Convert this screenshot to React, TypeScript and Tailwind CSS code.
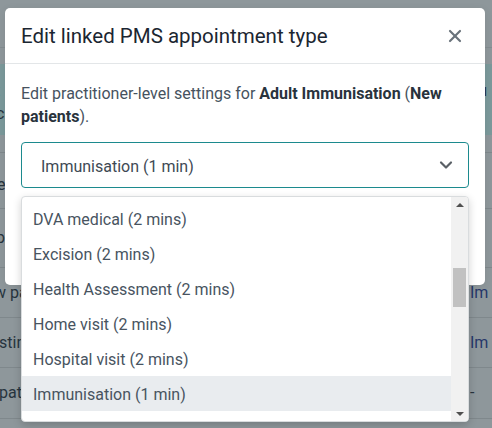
import React from "react";
import { ChevronDown, X } from "lucide-react";

const items = [
  "DVA medical (2 mins)",
  "Excision (2 mins)",
  "Health Assessment (2 mins)",
  "Home visit (2 mins)",
  "Hospital visit (2 mins)",
  "Immunisation (1 min)",
  "Insurance medical (2 mins)",
];

function BgRow({
  h,
  left,
  leftShift,
  right,
  rightBlue,
}: {
  h: string;
  left?: string;
  leftShift?: string;
  right?: string;
  rightBlue?: boolean;
}) {
  return (
    <div className={`${h} flex items-center justify-between border-b border-[#7f888c] overflow-hidden`}>
      <div className="w-[40px] overflow-hidden whitespace-nowrap text-[16px] text-[#27343e]">
        <span className={`inline-block ${leftShift ?? ""}`}>{left}</span>
      </div>
      <div
        className={`w-[22px] overflow-hidden whitespace-nowrap text-[16px] ${
          rightBlue ? "text-[#26386a]" : "text-[#27343e]"
        }`}
      >
        {right}
      </div>
    </div>
  );
}

export default function App() {
  return (
    <div className="relative w-[492px] h-[428px] overflow-hidden bg-[#8e979b] font-['Roboto','Inter',sans-serif]">
      {/* dimmed page behind */}
      <div className="flex flex-col">
        <div className="h-[48px] border-b border-[#838c90]" />
        <div className="h-[16px]" />
        <div className="h-[71px] bg-[#7b999b] flex justify-between pt-[15px] text-[16px] text-[#27343e] leading-[23px]">
          <div className="w-[40px] overflow-hidden whitespace-nowrap">
            <div className="-ml-[5px]">t</div>
            <div className="-ml-[4px]">c</div>
          </div>
          <div className="w-[22px] overflow-hidden whitespace-nowrap">su</div>
        </div>
        <div className="h-[18px] border-b border-[#7f888c]" />
        <BgRow h="h-[56px] pt-[8px]" left="e" leftShift="-ml-[3px]" right="in" />
        <BgRow h="h-[59px]" left="p" leftShift="-ml-[4px]" />
        <BgRow h="h-[50px]" left="w pa" leftShift="-ml-[6px]" right="Im" rightBlue />
        <BgRow h="h-[50px]" left="stin" leftShift="-ml-[1px]" right="Im" rightBlue />
        <BgRow h="h-[51px]" left="pati" leftShift="-ml-[1px]" right="-" />
      </div>

      {/* modal */}
      <div className="absolute left-[5px] top-[8px] w-[480px] h-[277px] bg-white rounded-[5px] shadow-[0_2px_8px_rgba(0,0,0,0.08)]">
        <div className="h-[56px] flex items-center justify-between pl-4 pr-[20px] pt-[1px] border-b border-[#e3e6e8]">
          <h2 className="text-[20.5px] leading-[28px] font-normal text-[#1b2631]">
            Edit linked PMS appointment type
          </h2>
          <X size={20} strokeWidth={2.6} className="text-[#6a737b]" />
        </div>
        <div className="p-4">
          <p className="pt-[2px] text-[16px] leading-[23px] text-[#46525e]">
            Edit practitioner-level settings for{" "}
            <span className="font-bold text-[#29333d]">Adult Immunisation</span> (
            <span className="font-bold text-[#29333d]">New patients</span>).
          </p>
          <div className="relative mt-[14px]">
            <div className="h-[46px] rounded-[4px] border border-[#1c8a8e] flex items-center justify-between pl-[19px] pr-[12px]">
              <span className="pt-[3px] text-[16px] text-[#3e4954]">Immunisation (1 min)</span>
              <ChevronDown size={20} strokeWidth={2.6} className="text-[#5a6066]" />
            </div>

            {/* dropdown list */}
            <div className="absolute left-0 top-[54px] w-[448px] h-[226px] bg-white border border-[#d9dcde] rounded-[4px] shadow-[0_3px_8px_rgba(0,0,0,0.18)] overflow-hidden flex">
              <div className="flex-1 overflow-hidden pt-[4px]">
                {items.map((it) => (
                  <div
                    key={it}
                    className={`h-[35px] flex items-center pl-[11px] pt-[2px] text-[16px] text-[#48545f] whitespace-nowrap ${
                      it === "Immunisation (1 min)" ? "bg-[#e9ecef]" : ""
                    }`}
                  >
                    {it}
                  </div>
                ))}
              </div>
              <div className="w-[17px] bg-[#f1f1f1] flex flex-col items-center">
                <div className="h-[15px] flex items-center justify-center">
                  <div className="w-0 h-0 border-l-[4px] border-r-[4px] border-b-[4px] border-l-transparent border-r-transparent border-b-[#505050]" />
                </div>
                <div className="h-[56px]" />
                <div className="w-[13px] h-[39px] bg-[#c1c1c1]" />
                <div className="flex-1" />
                <div className="h-[15px] flex items-center justify-center">
                  <div className="w-0 h-0 border-l-[4px] border-r-[4px] border-t-[4px] border-l-transparent border-r-transparent border-t-[#505050]" />
                </div>
              </div>
            </div>
          </div>
        </div>
      </div>
    </div>
  );
}
